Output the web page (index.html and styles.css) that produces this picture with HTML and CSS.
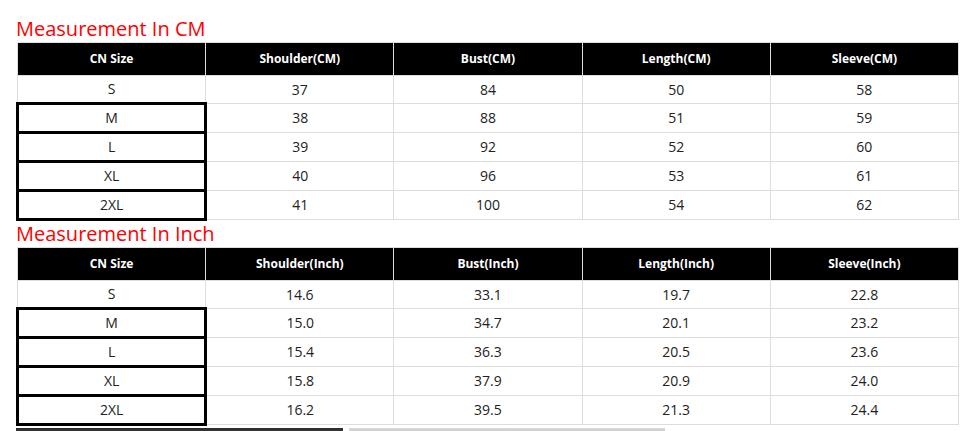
FILE: index.html
```html
<!DOCTYPE html>
<html lang="en">
<head>
<meta charset="utf-8">
<title>Size Chart</title>
<link rel="stylesheet" href="styles.css">
</head>
<body>
<div class="page">
  <h2 class="title">Measurement In CM</h2>
  <table class="chart">
    <thead>
      <tr><th>CN Size</th><th>Shoulder(CM)</th><th>Bust(CM)</th><th>Length(CM)</th><th>Sleeve(CM)</th></tr>
    </thead>
    <tbody>
      <tr><td>S</td><td>37</td><td>84</td><td>50</td><td>58</td></tr>
      <tr><td class="mark">M</td><td>38</td><td>88</td><td>51</td><td>59</td></tr>
      <tr><td class="mark">L</td><td>39</td><td>92</td><td>52</td><td>60</td></tr>
      <tr><td class="mark">XL</td><td>40</td><td>96</td><td>53</td><td>61</td></tr>
      <tr><td class="mark">2XL</td><td>41</td><td>100</td><td>54</td><td>62</td></tr>
    </tbody>
  </table>
  <h2 class="title">Measurement In Inch</h2>
  <table class="chart">
    <thead>
      <tr><th>CN Size</th><th>Shoulder(Inch)</th><th>Bust(Inch)</th><th>Length(Inch)</th><th>Sleeve(Inch)</th></tr>
    </thead>
    <tbody>
      <tr><td>S</td><td>14.6</td><td>33.1</td><td>19.7</td><td>22.8</td></tr>
      <tr><td class="mark">M</td><td>15.0</td><td>34.7</td><td>20.1</td><td>23.2</td></tr>
      <tr><td class="mark">L</td><td>15.4</td><td>36.3</td><td>20.5</td><td>23.6</td></tr>
      <tr><td class="mark">XL</td><td>15.8</td><td>37.9</td><td>20.9</td><td>24.0</td></tr>
      <tr><td class="mark">2XL</td><td>16.2</td><td>39.5</td><td>21.3</td><td>24.4</td></tr>
    </tbody>
  </table>
  <div class="strip">
    <div class="strip-dark"></div>
    <div class="strip-light"></div>
  </div>
</div>
</body>
</html>
```
FILE: styles.css
```css
html, body {
  margin: 0;
  padding: 0;
  background: #fff;
}
body {
  font-family: "Open Sans", "Liberation Sans", sans-serif;
  color: #333;
}
.page {
  padding: 16px 0 0 16px;
}
.title {
  margin: 0;
  font-size: 20px;
  line-height: 26px;
  font-weight: normal;
  color: #ff0000;
}
.chart {
  border-collapse: collapse;
  table-layout: fixed;
  width: 943px;
}
.chart th,
.chart td {
  border: 1px solid #dddddd;
  text-align: center;
  padding: 0;
}
.chart th {
  background: #000;
  color: #fff;
  font-weight: bold;
  font-size: 12px;
  height: 32px;
  line-height: 16px;
}
.chart td {
  height: 26px;
  font-size: 14px;
  line-height: 18px;
  color: #222;
}
.chart td.mark {
  border: 3px solid #000;
}
.strip {
  display: flex;
  gap: 6px;
  margin-top: 2px;
  height: 10px;
}
.strip-dark {
  width: 327px;
  background: linear-gradient(#2a2a2a, #555);
}
.strip-light {
  width: 316px;
  background: linear-gradient(#d8d8d8, #bbb);
}
```
